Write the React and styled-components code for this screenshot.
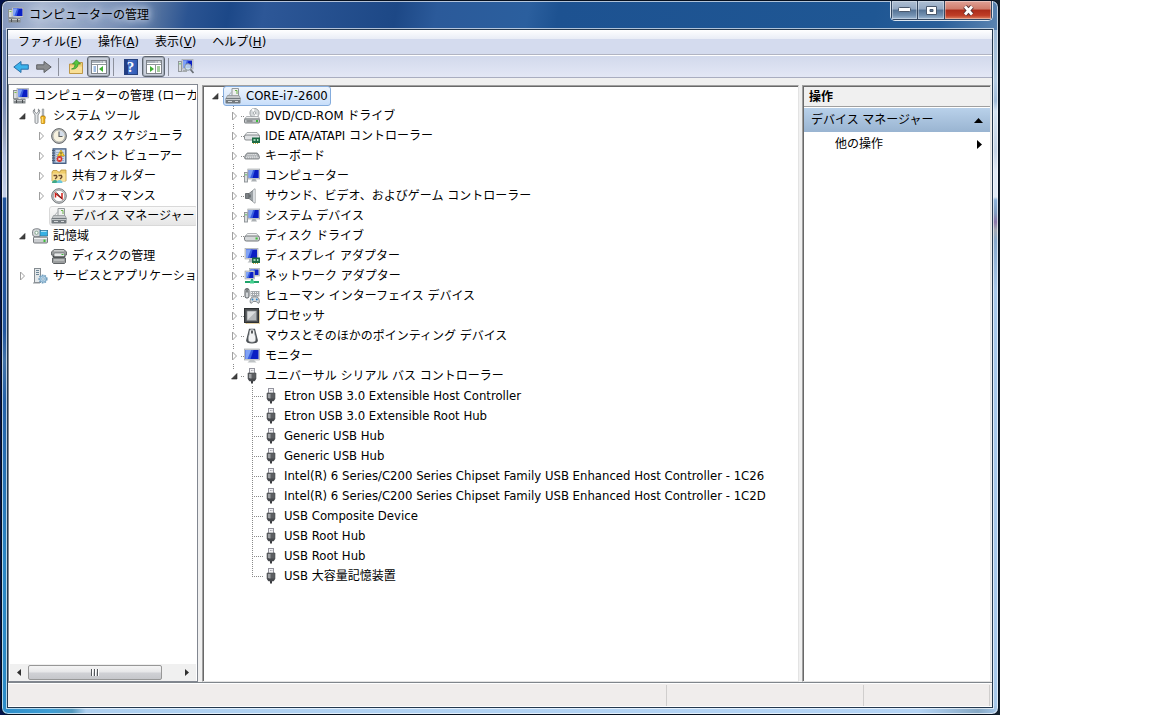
import React, { useState } from 'react';
import styled, { createGlobalStyle, css } from 'styled-components';

const GlobalStyle = createGlobalStyle`
  * {
    box-sizing: border-box;
  }
  body {
    margin: 0;
    background: #ffffff;
    color: #000000;
    font-family: "DejaVu Sans Condensed", "Noto Sans CJK JP", sans-serif;
    font-size: 12px;
    line-height: 20px;
  }
  button {
    font: inherit;
    color: inherit;
    border: 0;
    padding: 0;
    background: none;
  }
`;

/* ---------- text ---------- */

const TextRun = styled.span`
  line-height: 18px;
  white-space: pre;
`;

const Latin = styled.span`
  font-size: 13px;
`;

// latin letters and spaces are set one size above the kana
const Text = ({ children }) => (
  <TextRun>
    {children.split(/([\x20-\x7e]+)/).map((run, i) => (
      i % 2 ? <Latin key={i}>{run}</Latin> : run
    ))}
  </TextRun>
);

/* ---------- icons ---------- */

const Svg = styled.svg`
  display: block;
  flex: none;
  width: 16px;
  height: 16px;
`;

const Screen = ({ x = 0, y = 0, w = 10, h = 8 }) => (
  <g transform={`translate(${x} ${y})`}>
    <rect width={w} height={h} fill="#d3d6d8" stroke="#9a9fa3" strokeWidth="0.6" />
    <rect x="1" y="1" width={w - 2} height={h - 2} fill="#0a1fc4" />
    <path d={`M1 1H${w * 0.6}L${w * 0.4} ${h - 1}H1z`} fill="#3a5fe0" />
    <path d={`M1 1H${w * 0.45}L${w * 0.2} ${h - 1}H1z`} fill="#7fa2f5" />
  </g>
);

const Chip = () => (
  <g>
    <rect x="8" y="9.5" width="8" height="5.5" fill="#1d6b45" />
    <path d="M9.5 15v1M11.5 15v1M13.5 15v1" stroke="#c9a83a" />
    <rect x="9.5" y="11" width="2" height="2" fill="#9fd0b4" />
    <rect x="13" y="11" width="1.4" height="2" fill="#a9dcc0" />
  </g>
);

const icons = {
  management: (
    <g>
      <rect x="0.5" y="2.5" width="4.5" height="8" fill="#d9dcdf" stroke="#8b9094" />
      <path d="M1.5 4.5h2" stroke="#7ac143" />
      <Screen x={4} y={0.5} w={11.5} h={9.5} />
      <path d="M8 10h4l1 1.500H7z" fill="#b2b6b9" />
      <rect x="0.5" y="11" width="12" height="4.5" rx="0.5" fill="#868b8e" />
      <path d="M1 12.500h11" stroke="#c8cbcd" />
      <path d="M3.500 12v3M9.500 12v3" stroke="#4a4e51" />
    </g>
  ),
  tools: (
    <g>
      <path d="M2.600 1v3l1.900 1.400L6.400 4V1c1.600 1 2 3.200.2 5L6 7v7.300c0 1.600-3 1.600-3 0V7L2.400 6C.6 4.200 1 2 2.600 1z" fill="#e3e6e8" stroke="#74797d" strokeWidth="0.8" />
      <path d="M10.300 1h1.400v7h-1.400z" fill="#d6d9db" stroke="#85898c" strokeWidth="0.7" />
      <path d="M9.200 8h3.600l.6 2-.6 1v4c0 1.200-3.600 1.200-3.600 0v-4l-.6-1z" fill="#f3b51b" stroke="#a8740a" strokeWidth="0.7" />
      <path d="M10.300 9v6" stroke="#ffe38a" />
    </g>
  ),
  clock: (
    <g>
      <circle cx="8" cy="8" r="7.4" fill="#b9b9b5" stroke="#65696c" />
      <circle cx="8" cy="8" r="5.9" fill="#f7f2df" stroke="#a5a7a6" strokeWidth="0.6" />
      <path d="M8 8h5.500A5.500 5.500 0 0 0 8 2.500z" fill="#d5deea" />
      <path d="M8 3.500V8.500h3.500" stroke="#5a5e62" fill="none" strokeWidth="1.1" />
    </g>
  ),
  events: (
    <g>
      <rect x="2" y="0.8" width="13" height="14.6" fill="#7d96b8" stroke="#3c5478" />
      <rect x="4.5" y="1.8" width="9.5" height="12.5" fill="#cdd9ea" />
      <path d="M5 4.500h8M5 6.500h8M5 8.500h8M5 10.500h8M5 12.500h8" stroke="#8ba4c9" strokeWidth="0.8" />
      <path d="M1 2.500h3M1 5h3M1 7.500h3M1 10h3M1 12.500h3" stroke="#4c5d74" />
      <path d="M10 2l3.500 6h-7z" fill="#ffd83a" stroke="#b58c0a" strokeWidth="0.6" />
      <path d="M10 4v2.300M10 6.800v.7" stroke="#333333" strokeWidth="0.9" />
      <circle cx="8.5" cy="11" r="2.9" fill="#d8332a" />
      <path d="M7.300 9.800l2.400 2.400M9.700 9.800l-2.400 2.400" stroke="#ffffff" />
    </g>
  ),
  shared: (
    <g>
      <path d="M1 4l1-1.500h4L7.500 4H9l1-2h5v11H1z" fill="#f0cd6a" stroke="#b8923a" strokeWidth="0.8" />
      <path d="M1.500 5.500h13V13h-13z" fill="#f9e19a" />
      <path d="M2.500 7.500h3c1 1.500 0 2.500-1.500 3.500M7.500 7.500h3c1 1.500 0 2.500-1.500 3.500" stroke="#6b4a2c" strokeWidth="1.3" fill="none" />
      <path d="M1 15c0-4 6-4 6 0z" fill="#3fa987" />
      <path d="M5.500 15c0-4 6-4 6 0z" fill="#6cc8dc" />
    </g>
  ),
  performance: (
    <g>
      <circle cx="8" cy="8" r="7.3" fill="#c9cccd" stroke="#73787b" />
      <circle cx="8" cy="8" r="5.7" fill="#ffffff" stroke="#8c9194" strokeWidth="0.7" />
      <path d="M4.500 9.500V5.500L11 10.500V5" stroke="#d0201a" strokeWidth="1.5" fill="none" />
      <path d="M5.500 4.500l5 6" stroke="#22272a" strokeWidth="0.9" />
    </g>
  ),
  device: (
    <g>
      <path d="M7 0.500h6.500V9H7z" fill="#eef0ef" stroke="#93989b" />
      <path d="M10 2.500h2v3.500" stroke="#6cb14a" fill="none" />
      <path d="M7 3.500L3 8" stroke="#aeb2b5" />
      <path d="M2.500 7.500h11.500l1.500 3H1z" fill="#c3c6c8" stroke="#8b9094" strokeWidth="0.7" />
      <rect x="0.5" y="10" width="15" height="5.5" rx="0.7" fill="#737a7f" />
      <path d="M1 11.500h14" stroke="#c4c8ca" />
      <path d="M3 13.500h4M10 13.500h3" stroke="#d3d6d8" />
    </g>
  ),
  storage: (
    <g>
      <rect x="0.5" y="0.8" width="8.5" height="8" rx="3" fill="#d5d8da" stroke="#80858a" />
      <circle cx="4.5" cy="4.8" r="1.6" fill="#ffffff" stroke="#85aa92" />
      <rect x="8" y="2.5" width="7.7" height="5.5" fill="#38b2e4" stroke="#2a6c90" strokeWidth="0.7" />
      <path d="M9 3.500h5.500" stroke="#a8e3fa" />
      <rect x="1.5" y="9" width="14" height="6" rx="1" fill="#c9cccf" stroke="#75797d" />
      <path d="M2 10.500h13" stroke="#f3f4f4" />
      <rect x="11.5" y="11.5" width="2" height="2.5" fill="#3ebd3a" />
    </g>
  ),
  disks: (
    <g>
      <path d="M3 1.500h10l2.500 2.500v3H.5V4z" fill="#9a9d9e" stroke="#6a6e70" />
      <path d="M3 2.800h10" stroke="#e0e2e2" />
      <path d="M1 7.500h14l-1.500 2.500h-11z" fill="#3f4345" />
      <rect x="3" y="5" width="10.5" height="3.5" rx="1" fill="#e6e8e8" stroke="#666a6c" strokeWidth="0.6" />
      <path d="M1.500 10h13v4.500l-1 1H2.500l-1-1z" fill="#9b9e9f" stroke="#626668" />
      <path d="M3 12h10" stroke="#d5d7d7" />
      <rect x="10.5" y="6" width="2" height="1" fill="#3ebd3a" />
    </g>
  ),
  services: (
    <g>
      <rect x="2.5" y="0.5" width="6" height="14" fill="#e4e8ea" stroke="#858c91" />
      <path d="M4 2.500h3M4 4.500h3M4 6.500h3" stroke="#6d8797" />
      <path d="M1 15h7" stroke="#92989c" />
      <circle cx="11" cy="11" r="3.8" fill="#a8cbe3" stroke="#6f9cbc" strokeWidth="1.6" strokeDasharray="1.6 1.1" />
      <circle cx="11" cy="11" r="3" fill="#b5d5ea" stroke="#7fa9c7" strokeWidth="0.7" />
      <circle cx="11" cy="11" r="1.2" fill="#ffffff" stroke="#5b89aa" strokeWidth="0.6" />
    </g>
  ),
  dvd: (
    <g>
      <circle cx="10.5" cy="5" r="4.6" fill="#d6dadc" stroke="#8b9093" strokeWidth="0.8" />
      <path d="M10.500 5L7.500 1.500A4.500 4.500 0 0 1 10 .6zM10.500 5l3.500 3a4.500 4.500 0 0 1-2.500 1.400z" fill="#ffffff" />
      <circle cx="10.5" cy="5" r="1.3" fill="#ffffff" stroke="#8b9093" strokeWidth="0.7" />
      <path d="M2.500 8.500h12l1 2.500H0.500z" fill="#eceeee" stroke="#969a9d" strokeWidth="0.7" />
      <rect x="0.5" y="11" width="15" height="4" rx="0.8" fill="#c2c6c8" stroke="#6f7477" strokeWidth="0.9" />
      <path d="M2.500 13h6" stroke="#5a5e61" />
      <rect x="12" y="12" width="2" height="2" fill="#3ebd3a" />
    </g>
  ),
  ide: (
    <g>
      <path d="M3 4.500h10L15.500 7.500v3H.5v-3z" fill="#f2f3f4" stroke="#9a9fa2" strokeWidth="0.9" />
      <rect x="0.5" y="7" width="15" height="5" rx="1.5" fill="#dfe1e3" stroke="#7d8184" strokeWidth="0.9" />
      <Chip />
    </g>
  ),
  keyboard: (
    <g>
      <path d="M3.500 5h9.500c1 0 2.500 3.500 2.500 4.500s-.5 1.500-1.500 1.500H2c-1 0-1.500-.5-1.500-1.500S2.500 5 3.500 5z" fill="#a9adb0" stroke="#6c7175" strokeWidth="0.8" />
      <path d="M3.500 6.500h9.500M2.500 8.200h11.500M2 9.700h12.500" stroke="#eff1f2" strokeWidth="0.9" strokeDasharray="1.2 0.7" />
    </g>
  ),
  computer: (
    <g>
      <rect x="0.5" y="4.5" width="3" height="9.5" fill="#d9dcde" stroke="#8c9194" strokeWidth="0.9" />
      <rect x="1.5" y="6" width="1" height="1.5" fill="#3ebd3a" />
      <Screen x={3.8} y={1} w={11.9} h={10} />
      <path d="M8.500 11h3l1.500 2.500H7z" fill="#abb0b3" />
    </g>
  ),
  sound: (
    <g>
      <path d="M1.500 5.500h3.500v5H1.500z" fill="#7c8185" stroke="#585d61" strokeWidth="0.8" />
      <path d="M5 5.500L11 .8v14.400L5 10.500z" fill="#9ba1a5" stroke="#6e7377" strokeWidth="0.8" />
      <path d="M9 2.500v11l2 1.500V1z" fill="#d9dde0" />
      <path d="M6 6.500v3" stroke="#454a4e" />
    </g>
  ),
  disk: (
    <g>
      <path d="M3.500 5.500h9L15 8.500H1z" fill="#f0f1f2" stroke="#9ca0a3" strokeWidth="0.8" />
      <rect x="0.5" y="8" width="15" height="5" rx="1.8" fill="#d4d7d9" stroke="#74787b" />
      <rect x="11.5" y="9.5" width="2.2" height="2" fill="#3ebd3a" />
    </g>
  ),
  display: (
    <g>
      <Screen x={1} y={0.5} w={13} h={10.5} />
      <path d="M5 11h4v2l2 1.500H3.500L5 13z" fill="#b5b9bb" />
      <Chip />
    </g>
  ),
  network: (
    <g>
      <Screen x={5.5} y={0.5} w={10} h={7.5} />
      <Screen x={1} y={3} w={9.5} h={8} />
      <path d="M8 11v3M1 14h14" stroke="#1fa36a" strokeWidth="1.8" />
      <rect x="6" y="12.5" width="4" height="3" fill="#43cf8e" />
    </g>
  ),
  hid: (
    <g>
      <rect x="1" y="0.5" width="4" height="9.5" rx="1.8" fill="#d2d6d9" stroke="#54595d" />
      <path d="M3 1v3.500" stroke="#2c3033" />
      <rect x="6.5" y="3" width="9" height="5.5" fill="#a4a9ad" />
      <path d="M7 4.500h8.500M7 6.500h8.500" stroke="#f3f4f5" strokeDasharray="1 1" />
      <path d="M7.500 9.500c1.500-1 5-1 6.500 0 1.300 1.500 1.800 4.500 1 5.500-1 1-2-.8-2.700-1.500H9.200C8.500 14.200 7.500 16 6.500 15c-.8-1-.3-4 1-5.500z" fill="#d6d9db" stroke="#6f757a" strokeWidth="0.8" />
      <circle cx="8.5" cy="11.5" r="0.9" fill="#2e84c8" />
      <circle cx="12.8" cy="11.5" r="0.9" fill="#2e84c8" />
    </g>
  ),
  processor: (
    <g>
      <rect x="2" y="2" width="13.5" height="13.5" fill="none" stroke="#c8a348" strokeWidth="1" strokeDasharray="1 1" />
      <rect x="0.5" y="0.5" width="14" height="14" fill="#4b4e50" stroke="#2e3133" />
      <rect x="3" y="3" width="9.5" height="9.5" fill="#b5b8ba" stroke="#828688" strokeWidth="0.8" />
      <path d="M3.500 3.500h8.500L3.500 12z" fill="#dcdedf" />
    </g>
  ),
  mouse: (
    <g>
      <path d="M5 .8h6L13.800 12c.3 2.200-1.500 3.400-5.800 3.400S1.900 14.200 2.200 12z" fill="#4b5054" />
      <path d="M8 1.200c2.500 0 2.600 2.300 2.900 5.300.9 2.500 1.100 4 .6 6-.3 2.200-6.700 2.200-7 0-.5-2-.3-3.500.6-6 .3-3 .4-5.300 2.900-5.300z" fill="#f1f2f3" stroke="#8c9194" strokeWidth="0.6" />
      <path d="M8 2.500v3" stroke="#24282b" strokeWidth="1.5" />
    </g>
  ),
  monitor: (
    <g>
      <Screen x={0.5} y={1} w={15} h={11} />
      <path d="M6 12h4l2.500 2.500h-9z" fill="#bfc3c5" />
    </g>
  ),
  usb: (
    <g>
      <rect x="5.5" y="0.5" width="5" height="5.5" fill="#f0f0f2" stroke="#94949e" />
      <path d="M7 2.500h.8M8.500 2.500h.8" stroke="#9a9aa4" />
      <path d="M4 5h8v5.500L10.500 13h-5L4 10.500z" fill="#5c5e62" stroke="#4c4e52" strokeWidth="0.6" />
      <path d="M5 6h2.500v6L5 9.500z" fill="#9fa1a5" />
      <path d="M4 10.500h8L10.500 13h-5z" fill="#46484c" />
      <path d="M8 13v2.500" stroke="#3b3d41" strokeWidth="2" />
    </g>
  ),
  back: (
    <path d="M8 2.500L.8 8 8 13.500v-3.300h7.300V5.800H8z" fill="#3bb3ec" stroke="#2b6fa8" strokeLinejoin="round" />
  ),
  forward: (
    <path d="M8 2.500L15.200 8 8 13.500v-3.300H.7V5.800H8z" fill="#8b8d8f" stroke="#5f6265" strokeLinejoin="round" />
  ),
  folder: (
    <g>
      <path d="M1.500 5h4l1-1.500h8v11h-13z" fill="#f0ce73" stroke="#b9913c" strokeWidth="0.9" />
      <path d="M2 7.500h12V14H2z" fill="#f8df96" />
      <path d="M3.500 10C6 9.500 7 8 7 5H4.500L8.500.800 12.500 5H10c0 3-2 5.500-6.500 5z" fill="#58c43f" stroke="#2e8a26" strokeWidth="0.7" />
    </g>
  ),
  paneLeft: (
    <g>
      <rect x="0.5" y="1.5" width="15" height="13" fill="#ffffff" stroke="#7d8288" />
      <path d="M1 3h14" stroke="#aab2bb" strokeWidth="2" />
      <path d="M12 3h2M9.500 3h1" stroke="#ffffff" />
      <path d="M1 5.500h14M6.500 6v8" stroke="#8f959b" />
      <path d="M2.500 8h2.500M2.500 10h2.500M2.500 12h2.500" stroke="#3f78c2" />
      <path d="M12 7v6l-4-3z" fill="#3fae33" />
    </g>
  ),
  paneRight: (
    <g>
      <rect x="0.5" y="1.5" width="15" height="13" fill="#ffffff" stroke="#7d8288" />
      <path d="M1 3h14" stroke="#aab2bb" strokeWidth="2" />
      <path d="M12 3h2M9.500 3h1" stroke="#ffffff" />
      <path d="M1 5.500h14M9.500 6v8" stroke="#8f959b" />
      <path d="M11 8h3M11 10h3M11 12h3" stroke="#4a9b3c" />
      <path d="M4 7v6l4-3z" fill="#3fae33" />
    </g>
  ),
  scan: (
    <g>
      <rect x="0.5" y="2.5" width="3" height="10" fill="#d9dcde" stroke="#8c9194" strokeWidth="0.9" />
      <rect x="1.5" y="4" width="1" height="1.5" fill="#3ebd3a" />
      <Screen x={4} y={0.5} w={11} h={9.5} />
      <path d="M5 11h4v2H4z" fill="#a6abae" />
      <circle cx="10" cy="8" r="3.3" fill="#cfe6f5" fillOpacity="0.85" stroke="#8c959c" />
      <path d="M12.500 10.500l3 3.500" stroke="#6a7076" strokeWidth="1.8" />
    </g>
  ),
};

const Icon = ({ name }) => (
  <Svg viewBox="0 0 16 16" aria-hidden="true">{icons[name]}</Svg>
);

/* ---------- window ---------- */

const Desktop = styled.div`
  display: flex;
  min-height: 100vh;
  padding-right: 152px;
`;

const Shell = styled.div`
  flex: 1;
  display: flex;
  min-width: 0;
  padding: 0 1px;
  background: linear-gradient(to right, #03124a, #020a2c 20%, #020a2c 90%, #14202c);
`;

const Window = styled.div`
  flex: 1;
  display: flex;
  flex-direction: column;
  min-width: 0;
  padding: 0 5px 6px;
  border: 1px solid #06101f;
  border-radius: 7px;
  box-shadow: inset 0 0 0 1px rgba(255, 255, 255, 0.65);
  background:
    linear-gradient(to right, #2c8cc8 0, #3f9ed4 48px, #5398bd 70px, #aed0f0 84px, #b4d4f5 92%, #86a8c4 98%, #a7c8ea) 0 100% / 100% 8px no-repeat,
    linear-gradient(to bottom, transparent 29px, #6b85b2 29px, #7489b4 100px, #98a5c0 135px, #a9b9da 155px, #c3cfe8 196px, #1f529b 197px, #21559e 330px, #4273a8 360px, #2461a8 400px, #2b86c4 560px, #2c8cc8) 0 0 / 8px 100% no-repeat,
    linear-gradient(to bottom, transparent 29px, #9db9d6 29px, #b3cbe2 80px, #a0bbd8 100px, #d4e3f2 110px, #c3d3e6 150px, #dfe9f5 170px, #dfe9f5 196px, #8db3da 199px, #7f9cc0 212px, #8a76a8 221px, #a3a9b4 229px, #86a8cc 240px, #a7c8ea 290px, #a7c8ea) 100% 0 / 8px 100% no-repeat,
    linear-gradient(100deg, #8094ba 0, #a9b8d1 40px, #7e94b9 110px, #52719f 155px, #2b5492 185px, #1c4888 225px, #2d5797 260px, #1d4886 390px, #2b5a9a 430px, #2b5f9e 520px, #1d5291 550px, #1f5794 78%, #2a5f9a 84%, #7f9fc2 93%, #8fabc9);
`;

const TitleBar = styled.header`
  display: flex;
  align-items: flex-start;
  height: 28px;
  padding-left: 1px;
`;

const WindowTitle = styled.h1`
  flex: 1;
  display: flex;
  align-items: center;
  gap: 5px;
  margin: 0;
  height: 28px;
  font-size: 12px;
  font-weight: 400;
  text-shadow: 0 0 6px #dfe7f3, 0 0 10px #c8d4e8, 0 0 14px #c8d4e8;
`;

const Controls = styled.div`
  display: flex;
  height: 20px;
  border: 1px solid #dde6f0;
  border-top: 0;
  border-radius: 0 0 5px 5px;
  overflow: hidden;
`;

const ControlButton = styled.button`
  display: flex;
  align-items: center;
  justify-content: center;
  width: ${props => (props.$close ? '47px' : '27px')};
  border: 1px solid #33465f;
  border-top: 0;
  border-left-width: ${props => (props.$first ? '1px' : '0')};
  background: ${props => props.$close
    ? 'linear-gradient(#e0a196, #cf7c6b 45%, #ab2c1a 50%, #bf3d26 80%, #dc8262)'
    : 'linear-gradient(#aebfd3, #93a8c2 45%, #557395 50%, #7391b1 80%, #a0b9d4)'};
  box-shadow: inset 0 0 0 1px rgba(255, 255, 255, 0.35);
`;

const Client = styled.div`
  flex: 1;
  display: flex;
  flex-direction: column;
  min-height: 0;
  border: 1px solid #24384e;
  box-shadow: 0 0 0 1px rgba(255, 255, 255, 0.65);
  background: #f0f0f0;
`;

const MenuBar = styled.nav`
  display: flex;
  height: 26px;
  padding: 2px 2px 0;
  border-bottom: 1px solid #ffffff;
  background: linear-gradient(#ffffff, #e9edf6 9px, #d4dbee 9px, #d4dbee 24px, #b1b4c2 24px);
`;

const MenuItem = styled.button`
  height: 20px;
  padding: 0 8px;
  white-space: nowrap;
`;

const ToolBar = styled.div`
  display: flex;
  align-items: center;
  height: 22px;
  padding: 0 1px;
  border-bottom: 1px solid #a9adc0;
  background: linear-gradient(#d2d9ec, #e3e7f5);
`;

const ToolButton = styled.button`
  display: flex;
  align-items: center;
  justify-content: center;
  width: 23px;
  height: 21px;
  ${props => props.$pressed && css`
    border: 1px solid #5d6570;
    border-radius: 3px;
    background: #c9cfdb;
    box-shadow: inset 0 0 0 1px #a3aab6;
  `}
`;

const ToolSeparator = styled.span`
  width: 1px;
  height: 18px;
  margin: 0 5px 0 3px;
  background: #8c909c;
`;

const HelpBadge = styled.span`
  width: 14px;
  height: 16px;
  border: 1px solid #26417e;
  background: linear-gradient(to right, #223d86 3px, #4872c8 3px, #3159b4);
  color: #ffffff;
  font-family: "Liberation Serif", serif;
  font-size: 15px;
  font-weight: 700;
  line-height: 14px;
  text-align: center;
`;

const Panes = styled.div`
  flex: 1;
  display: flex;
  min-height: 0;
  padding: 6px 1px 0 0;
`;

const ConsolePane = styled.aside`
  display: flex;
  flex-direction: column;
  flex: 0 0 190px;
  min-width: 0;
  margin-right: 4px;
  padding: 1px 1px 0 0;
  border: 1px solid #828790;
  background: #ffffff;
`;

const sunken = css`
  border: 1px solid #e3e3e3;
  border-top-color: #a0a0a0;
  border-left-color: #a0a0a0;
  box-shadow: inset 1px 1px 0 #696969;
  background: #ffffff;
`;

const DevicePane = styled.main`
  flex: 1;
  min-width: 0;
  margin: 1px 3px 0 0;
  padding: 0 0 0 3px;
  overflow: hidden;
  ${sunken}
`;

const ActionsPane = styled.aside`
  flex: 0 0 189px;
  margin-top: 1px;
  padding: 1px 0 0 1px;
  ${sunken}
`;

const ActionsHeader = styled.h2`
  height: 20px;
  margin: 0;
  padding-left: 5px;
  border-bottom: 1px solid #a0a0a0;
  background: #f0f0f0;
  font-size: 12px;
  font-weight: 700;
`;

const ActionButton = styled.button`
  display: flex;
  align-items: center;
  justify-content: space-between;
  width: 100%;
  height: ${props => (props.$group ? '25px' : '24px')};
  padding: 0 7px 0 ${props => (props.$group ? '7px' : '31px')};
  background: ${props => (props.$group ? 'linear-gradient(#b9d1ea, #99b4d1)' : 'none')};
  border-top: ${props => (props.$group ? '1px solid #ffffff' : '0')};
  white-space: nowrap;
`;

const Mark = styled.svg`
  display: block;
  width: 9px;
  height: 9px;
`;

const StatusBar = styled.footer`
  display: flex;
  height: 25px;
  padding: 2px 2px 1px 0;
  border-top: 1px solid #80868c;
  background: linear-gradient(#ffffff 1px, #f0edec 1px, #f0edec 23px, #ffffff 23px);
`;

const StatusCell = styled.span`
  flex: ${props => props.$grow || 1};
  border-right: 1px solid #d0cecd;
`;

/* ---------- tree ---------- */

const TreeList = styled.ul`
  margin: 0;
  padding: 0 0 0 ${props => (props.$nested ? '19px' : '0')};
  list-style: none;
`;

const TreeScroll = styled.div`
  flex: 1;
  min-height: 0;
  padding-left: 4px;
  overflow: hidden;
`;

const TreeRow = styled.div`
  display: flex;
  align-items: center;
  height: 20px;
`;

const dotsDown = 'repeating-linear-gradient(to bottom, #8a8a8a 0 1px, transparent 1px 2px)';
const dotsAcross = 'repeating-linear-gradient(to right, #8a8a8a 0 1px, transparent 1px 2px)';

const ExpanderCell = styled.span`
  flex: none;
  display: flex;
  align-items: center;
  width: 19px;
  height: 20px;
  padding-left: 4px;
  ${props => props.$lines && css`
    background:
      ${dotsDown} 8px 0 / ${props.$root ? '0 0' : props.$last ? '1px 11px' : '1px 20px'} no-repeat,
      ${dotsAcross} 8px 10px / 11px 1px no-repeat;
  `}
`;

const Expander = styled.button`
  display: block;
  width: 11px;
  height: 14px;
  background: #ffffff;
`;

const ExpanderMark = styled.svg`
  display: block;
  width: 11px;
  height: 14px;
`;

const TreeLabel = styled.span`
  display: flex;
  align-items: center;
  gap: 5px;
  height: 20px;
  margin-left: -2px;
  padding: 0 2px 0 1px;
  border: 1px solid transparent;
  border-radius: 3px;
  white-space: nowrap;
  ${props => props.$selected === 'active' && css`
    border-color: #84acdd;
    background: linear-gradient(#eef5fd, #c8defa);
  `}
  ${props => props.$selected === 'idle' && css`
    flex: 1 0 auto;
    border-color: #d9d9d9;
    background: linear-gradient(#f9f9f9, #e6e6e6);
  `}
`;

function TreeNode({ node, lines, root, last }) {
  const [open, setOpen] = useState(Boolean(node.children));
  const expandable = node.children || node.closed;

  return (
    <li role="treeitem" aria-expanded={expandable ? open : undefined}>
      <TreeRow>
        {!node.bare && (
          <ExpanderCell $lines={lines} $root={root} $last={last}>
            {expandable && (
              <Expander type="button" aria-label={node.label} onClick={() => setOpen(!open)}>
                <ExpanderMark viewBox="0 0 11 14" aria-hidden="true">
                  {open
                    ? <path d="M8 4.500v5.500H2.500z" fill="#404040" stroke="#262626" strokeWidth="0.6" />
                    : <path d="M3.500 3v8l4-4z" fill="#ffffff" stroke="#a0a0a0" />}
                </ExpanderMark>
              </Expander>
            )}
          </ExpanderCell>
        )}
        <TreeLabel $selected={node.selected}>
          <Icon name={node.icon} />
          <Text>{node.label}</Text>
        </TreeLabel>
      </TreeRow>
      {open && node.children && (
        <TreeList role="group" $nested={!node.bare}>
          {node.children.map((child, i) => (
            <TreeNode
              key={child.label + i}
              node={child}
              lines={lines}
              last={i === node.children.length - 1}
            />
          ))}
        </TreeList>
      )}
    </li>
  );
}

/* ---------- scroll bar ---------- */

const ScrollBar = styled.div`
  display: flex;
  height: 17px;
  margin-left: 1px;
  background: #f0f0f0;
`;

const ScrollButton = styled.button`
  display: flex;
  align-items: center;
  justify-content: center;
  width: 18px;
`;

const ScrollTrack = styled.div`
  flex: 1;
  display: flex;
`;

const ScrollThumb = styled.div`
  display: flex;
  align-items: center;
  justify-content: center;
  width: 89%;
  height: 15px;
  margin-top: 1px;
  border: 1px solid #979797;
  border-radius: 2px;
  background: linear-gradient(#f5f5f5, #e6e6e8 48%, #d0d1d5 52%, #c6c7cb);
`;

/* ---------- data ---------- */

const consoleTree = {
  label: 'コンピューターの管理 (ローカル)',
  icon: 'management',
  bare: true,
  children: [
    {
      label: 'システム ツール',
      icon: 'tools',
      children: [
        { label: 'タスク スケジューラ', icon: 'clock', closed: true },
        { label: 'イベント ビューアー', icon: 'events', closed: true },
        { label: '共有フォルダー', icon: 'shared', closed: true },
        { label: 'パフォーマンス', icon: 'performance', closed: true },
        { label: 'デバイス マネージャー', icon: 'device', selected: 'idle' },
      ],
    },
    {
      label: '記憶域',
      icon: 'storage',
      children: [{ label: 'ディスクの管理', icon: 'disks' }],
    },
    { label: 'サービスとアプリケーション', icon: 'services', closed: true },
  ],
};

const usbDevices = [
  'Etron USB 3.0 Extensible Host Controller',
  'Etron USB 3.0 Extensible Root Hub',
  'Generic USB Hub',
  'Generic USB Hub',
  'Intel(R) 6 Series/C200 Series Chipset Family USB Enhanced Host Controller - 1C26',
  'Intel(R) 6 Series/C200 Series Chipset Family USB Enhanced Host Controller - 1C2D',
  'USB Composite Device',
  'USB Root Hub',
  'USB Root Hub',
  'USB 大容量記憶装置',
];

const deviceTree = {
  label: 'CORE-i7-2600',
  icon: 'device',
  selected: 'active',
  children: [
    { label: 'DVD/CD-ROM ドライブ', icon: 'dvd', closed: true },
    { label: 'IDE ATA/ATAPI コントローラー', icon: 'ide', closed: true },
    { label: 'キーボード', icon: 'keyboard', closed: true },
    { label: 'コンピューター', icon: 'computer', closed: true },
    { label: 'サウンド、ビデオ、およびゲーム コントローラー', icon: 'sound', closed: true },
    { label: 'システム デバイス', icon: 'computer', closed: true },
    { label: 'ディスク ドライブ', icon: 'disk', closed: true },
    { label: 'ディスプレイ アダプター', icon: 'display', closed: true },
    { label: 'ネットワーク アダプター', icon: 'network', closed: true },
    { label: 'ヒューマン インターフェイス デバイス', icon: 'hid', closed: true },
    { label: 'プロセッサ', icon: 'processor', closed: true },
    { label: 'マウスとそのほかのポインティング デバイス', icon: 'mouse', closed: true },
    { label: 'モニター', icon: 'monitor', closed: true },
    {
      label: 'ユニバーサル シリアル バス コントローラー',
      icon: 'usb',
      children: usbDevices.map(label => ({ label, icon: 'usb' })),
    },
  ],
};

const menus = [
  { label: 'ファイル', accessKey: 'F' },
  { label: '操作', accessKey: 'A' },
  { label: '表示', accessKey: 'V' },
  { label: 'ヘルプ', accessKey: 'H' },
];

export default function App() {
  return (
    <Desktop lang="ja">
      <GlobalStyle />
      <Shell>
        <Window>
          <TitleBar>
            <WindowTitle>
              <Icon name="management" />
              <Text>コンピューターの管理</Text>
            </WindowTitle>
            <Controls>
              <ControlButton type="button" aria-label="最小化" $first>
                <svg width="13" height="6" aria-hidden="true">
                  <rect x="0.5" y="0.5" width="12" height="4" rx="1" fill="#ffffff" stroke="#4a586c" />
                </svg>
              </ControlButton>
              <ControlButton type="button" aria-label="最大化">
                <svg width="13" height="11" aria-hidden="true">
                  <path d="M1.500 1.500h10v8h-10zM5 4.500h3v2H5z" fill="#ffffff" fillRule="evenodd" stroke="#4a586c" />
                </svg>
              </ControlButton>
              <ControlButton type="button" aria-label="閉じる" $close>
                <svg width="13" height="11" aria-hidden="true">
                  <path d="M3 1.500l7 8M10 1.500l-7 8" stroke="#5a3436" strokeWidth="4.8" />
                  <path d="M3 1.500l7 8M10 1.500l-7 8" stroke="#ffffff" strokeWidth="2.8" />
                </svg>
              </ControlButton>
            </Controls>
          </TitleBar>

          <Client>
            <MenuBar>
              {menus.map(menu => (
                <MenuItem type="button" key={menu.accessKey}>
                  {menu.label}<Latin>(<u>{menu.accessKey}</u>)</Latin>
                </MenuItem>
              ))}
            </MenuBar>

            <ToolBar role="toolbar">
              <ToolButton type="button" aria-label="戻る"><Icon name="back" /></ToolButton>
              <ToolButton type="button" aria-label="進む"><Icon name="forward" /></ToolButton>
              <ToolSeparator />
              <ToolButton type="button" aria-label="1 つ上へ"><Icon name="folder" /></ToolButton>
              <ToolButton type="button" aria-label="コンソール ツリーの表示" $pressed><Icon name="paneLeft" /></ToolButton>
              <ToolSeparator />
              <ToolButton type="button" aria-label="ヘルプ"><HelpBadge>?</HelpBadge></ToolButton>
              <ToolButton type="button" aria-label="操作ウィンドウの表示" $pressed><Icon name="paneRight" /></ToolButton>
              <ToolSeparator />
              <ToolButton type="button" aria-label="ハードウェア変更のスキャン"><Icon name="scan" /></ToolButton>
            </ToolBar>

            <Panes>
              <ConsolePane>
                <TreeScroll>
                  <TreeList role="tree">
                    <TreeNode node={consoleTree} />
                  </TreeList>
                </TreeScroll>
                <ScrollBar>
                  <ScrollButton type="button" aria-label="左へスクロール">
                    <svg width="4" height="7" aria-hidden="true"><path d="M4 0v7L0 3.500z" fill="#303030" /></svg>
                  </ScrollButton>
                  <ScrollTrack>
                    <ScrollThumb>
                      <svg width="8" height="7" aria-hidden="true">
                        <path d="M.5 0v7M3.500 0v7M6.500 0v7" stroke="#55585c" />
                        <path d="M1.500 0v7M4.500 0v7M7.500 0v7" stroke="#ffffff" />
                      </svg>
                    </ScrollThumb>
                  </ScrollTrack>
                  <ScrollButton type="button" aria-label="右へスクロール">
                    <svg width="4" height="7" aria-hidden="true"><path d="M0 0v7L4 3.500z" fill="#303030" /></svg>
                  </ScrollButton>
                </ScrollBar>
              </ConsolePane>

              <DevicePane>
                <TreeList role="tree">
                  <TreeNode node={deviceTree} lines root />
                </TreeList>
              </DevicePane>

              <ActionsPane>
                <ActionsHeader>操作</ActionsHeader>
                <ActionButton type="button" $group>
                  <Text>デバイス マネージャー</Text>
                  <Mark viewBox="0 0 9 9" aria-hidden="true"><path d="M0 7L4.500 2 9 7z" /></Mark>
                </ActionButton>
                <ActionButton type="button">
                  <Text>他の操作</Text>
                  <Mark viewBox="0 0 9 9" aria-hidden="true"><path d="M3 0v9l5-4.500z" /></Mark>
                </ActionButton>
              </ActionsPane>
            </Panes>

            <StatusBar>
              <StatusCell $grow={659} />
              <StatusCell $grow={197} />
              <StatusCell $grow={125} />
            </StatusBar>
          </Client>
        </Window>
      </Shell>
    </Desktop>
  );
}
